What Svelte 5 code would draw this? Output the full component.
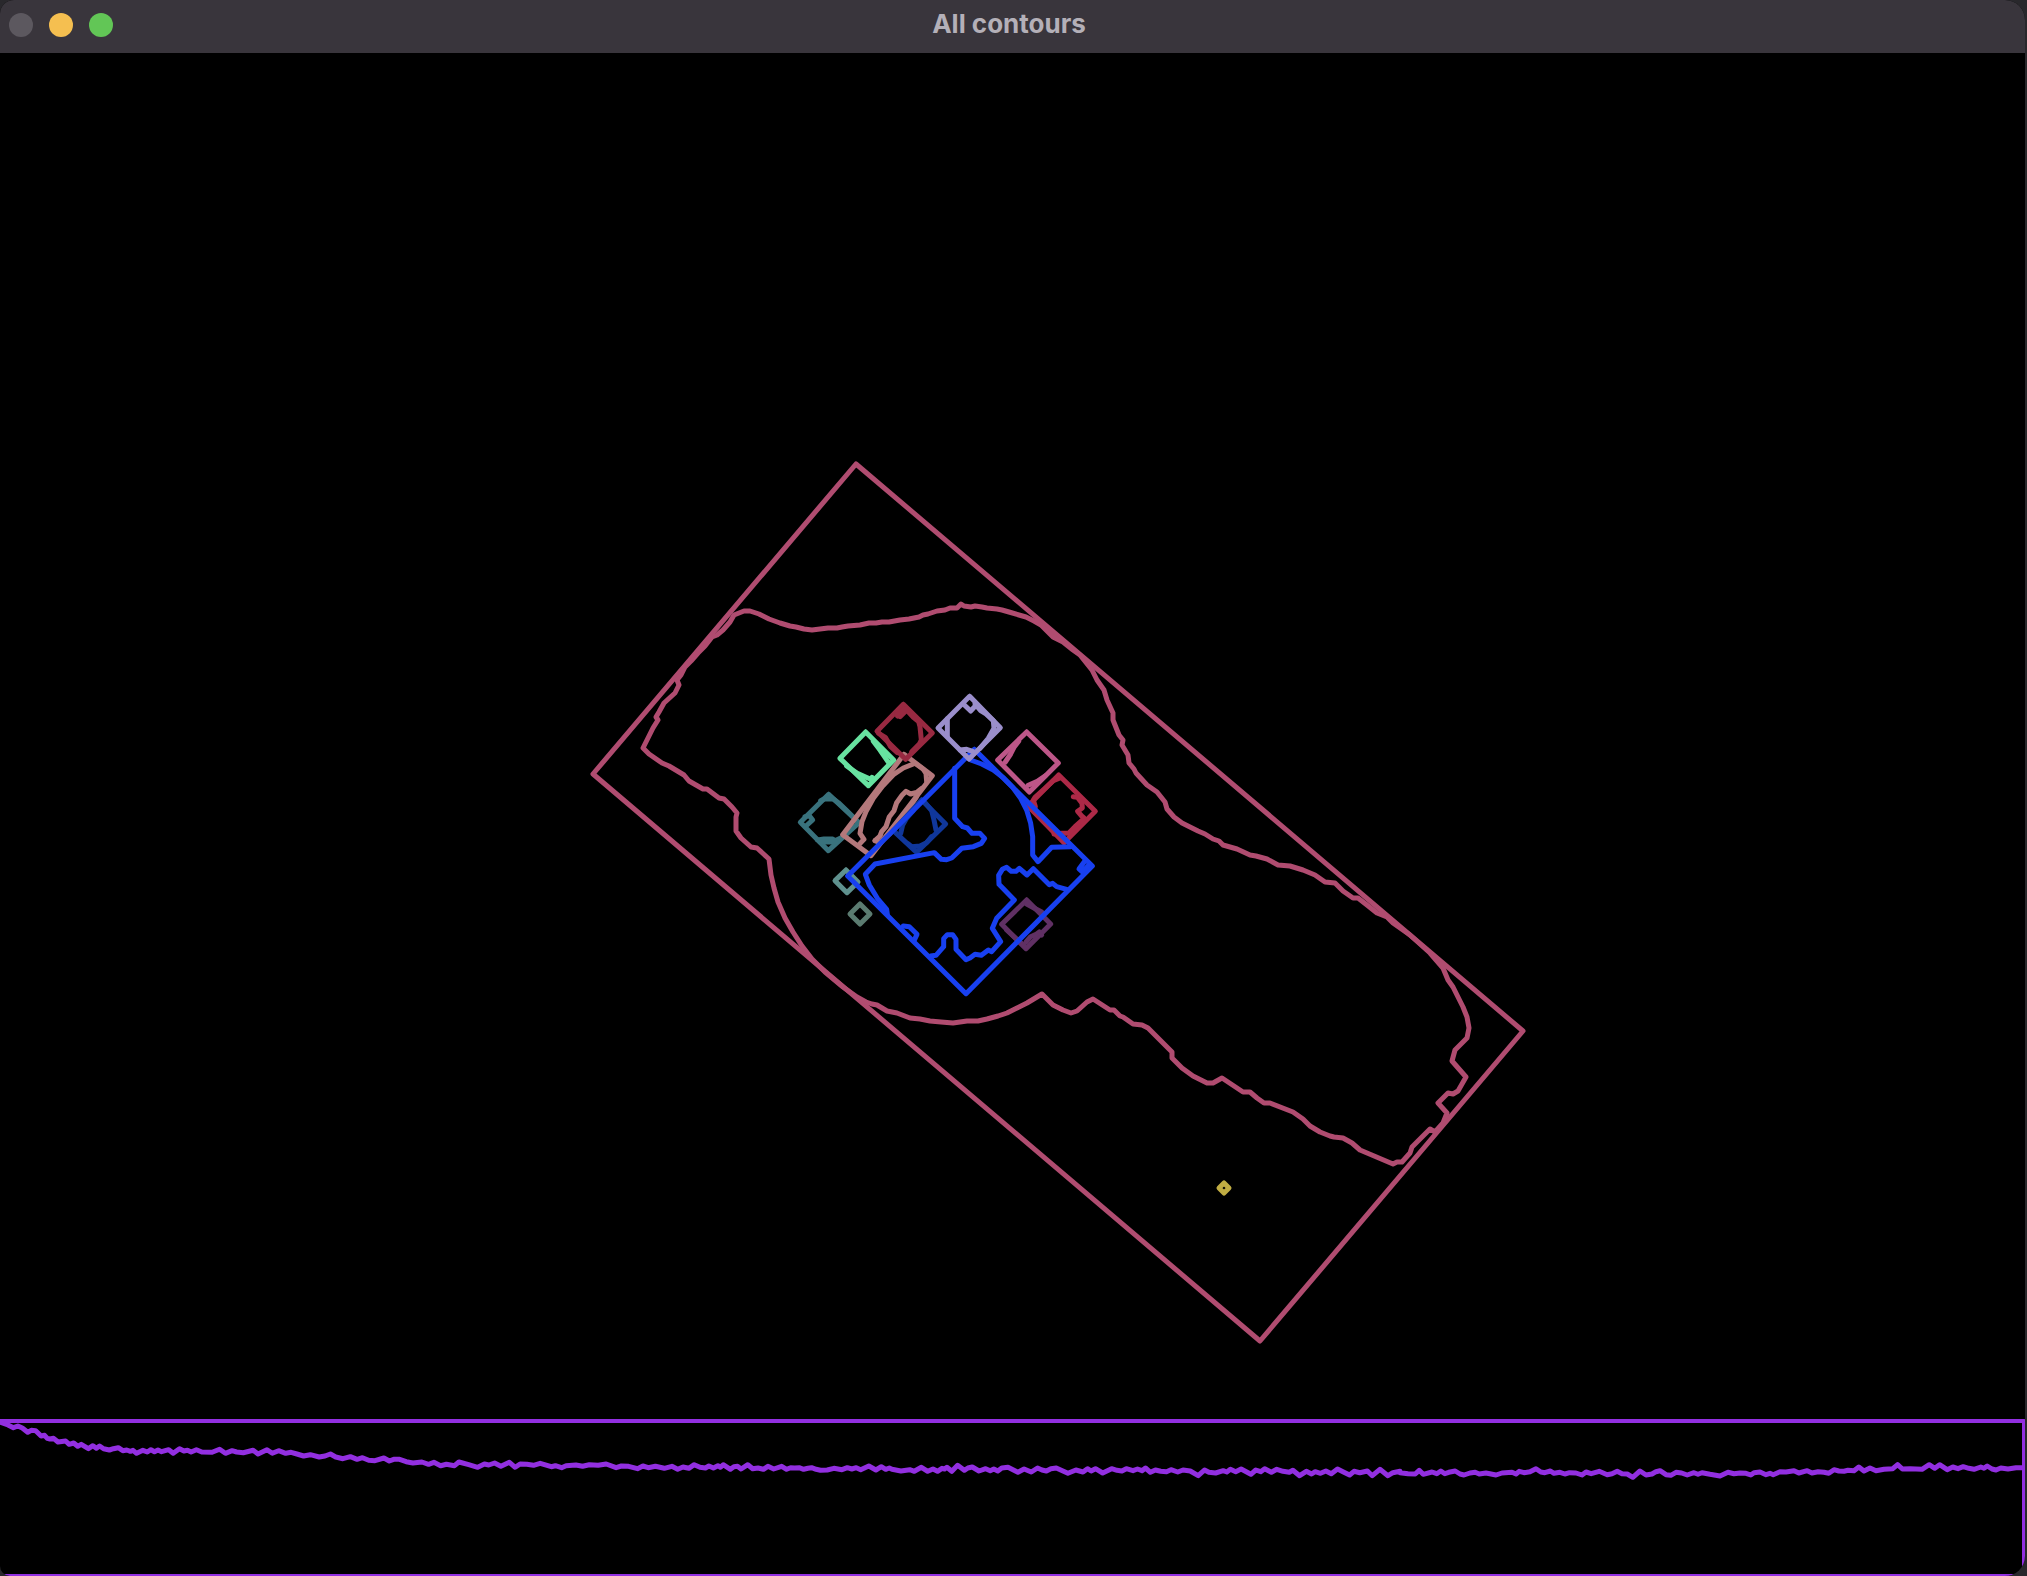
<script>
  const shapes = [
    {
      name: 'teal',
      color: '#39727d',
      lines: [
        '146,343 237,428 145,512 61,427 146,343',
        '122,362 132,357 160,357 175,368 200,392 228,420',
        '75,410 88,407 98,420 78,438',
        '112,480 132,477 158,477 165,482 190,470',
        '120,486 145,486 168,486'
      ]
    },
    {
      name: 'salmon',
      color: '#b4787b',
      lines: [
        '372,223 457,287 273,527 188,464 372,223',
        '400,252 370,264 340,284 308,318 280,355 258,395 246,425 240,460 252,478 237,494',
        '285,482 300,468 305,455 318,440 328,410 342,392 350,368 366,346 378,334 392,342 410,337 425,325',
        '285,482 300,488 330,460 370,410 410,350',
        '405,250 430,268 438,280 440,305'
      ]
    },
    {
      name: 'crimson',
      color: '#982941',
      lines: [
        '370,73 457,159 377,238 291,154 370,73',
        '352,108 372,86 378,92 360,110 350,104',
        '378,88 400,112 416,125 420,140 424,180 418,192 395,215',
        '296,160 316,172 332,200 352,218'
      ]
    },
    {
      name: 'mint',
      color: '#67e2a0',
      lines: [
        '257,156 341,240 265,317 180,235 257,156',
        '280,184 300,210 315,232 326,248',
        '200,258 232,280 250,288 272,298 276,292'
      ]
    },
    {
      name: 'navy',
      color: '#10379b',
      lines: [
        '425,360 497,432 410,517 340,452 425,360',
        '435,368 455,392 462,420 468,450',
        '362,460 368,435 380,414 400,392',
        '385,492 395,500 420,498 440,488 455,470'
      ]
    },
    {
      name: 'seafoam',
      color: '#5f918e',
      lines: ['198,570 234,606 201,638 165,602 198,570']
    },
    {
      name: 'sage',
      color: '#5b7b70',
      lines: ['240,672 270,702 240,732 210,702 240,672']
    },
    {
      name: 'orchid',
      color: '#bd5688',
      lines: [
        '740,156 835,249 748,336 653,240 740,156',
        '716,184 702,202 692,222 676,246',
        '745,316 772,304 795,288'
      ]
    },
    {
      name: 'red',
      color: '#ad2947',
      lines: [
        '836,285 946,394 852,488 744,378 836,285',
        '840,294 820,302 795,325 765,352 760,360 766,380 762,392',
        '880,350 892,352 906,370 907,384 893,394 905,408 912,414',
        '912,416 885,440 866,460 845,460 822,462',
        '765,395 800,430 850,482'
      ]
    },
    {
      name: 'plum',
      color: '#603064',
      lines: [
        '740,660 812,732 738,806 665,733 740,660',
        '740,672 762,684 785,696',
        '738,786 752,770 770,762 778,756 785,765',
        '680,750 705,773 735,800'
      ]
    },
    {
      name: 'blue',
      color: '#1840f0',
      lines: [
        '583,208 937,558 558,941 203,588 583,208',
        '572,240 605,252 640,270 670,293 698,322 722,355 740,390 752,430 758,470 758,525 774,545 815,502 872,500',
        '524,265 524,415 548,440 562,444 576,460 600,460 614,475 604,490 580,500 545,505 515,534 500,539 484,538 463,518 285,552 256,583 268,615 292,655 320,688 322,702',
        '370,738 388,740 411,763 404,778',
        '452,828 468,826 491,800 491,776 502,764 518,764 528,778 528,808 558,839 570,834 585,823 604,826 625,810 635,815 662,785 637,745 650,715 703,660 657,613 656,586 667,568 680,562 694,574 708,574 718,565 741,585 760,566 808,614 818,610 830,620 860,628',
        '913,545 897,567 907,576 926,556'
      ]
    },
    {
      name: 'lavender',
      color: '#9a8ecb',
      lines: [
        '569,49 661,143 567,237 474,144 569,49',
        '550,72 572,93 588,76',
        '585,72 602,92 618,102 640,122 642,145 625,175 600,205',
        '502,116 502,168',
        '540,210 560,208 578,214'
      ]
    }
  ];

  const armOutline =
    '744,611 734,615 730,622 723,630 717,635 712,637 705,646 698,653 691,661 685,667 681,675 677,680 679,685 675,693 664,703 659,712 656,717 658,720 653,728 648,738 643,748 649,754 662,763 669,766 684,775 689,781 703,789 707,789 719,798 724,799 732,807 737,813 736,817 736,831 741,838 751,847 757,848 769,859 771,875 774,888 778,902 785,918 793,932 802,946 812,959 825,972 843,987 857,997 866,1002 872,1004 877,1005 887,1011 897,1013 910,1018 920,1019 930,1021 941,1022 953,1023 967,1021 978,1021 987,1019 998,1016 1007,1013 1017,1008 1027,1003 1042,994 1053,1005 1063,1010 1071,1013 1077,1011 1087,1002 1093,999 1110,1010 1114,1010 1120,1016 1123,1017 1133,1024 1142,1025 1148,1028 1172,1052 1172,1058 1182,1068 1193,1076 1207,1083 1213,1083 1222,1078 1243,1092 1250,1092 1257,1098 1264,1103 1270,1103 1293,1112 1303,1119 1310,1126 1320,1132 1330,1136 1334,1137 1343,1138 1352,1143 1360,1150 1393,1164 1397,1162 1402,1162 1410,1153 1412,1147 1430,1129 1435,1132 1443,1123 1447,1113 1438,1103 1448,1093 1453,1094 1458,1091 1466,1077 1452,1061 1455,1050 1467,1038 1469,1028 1467,1017 1463,1007 1457,995 1453,987 1448,980 1443,968 1430,953 1410,935 1393,923 1387,917 1377,913 1367,905 1358,898 1353,898 1343,891 1335,883 1325,882 1315,875 1303,870 1290,866 1278,865 1267,859 1256,856 1250,855 1237,849 1223,845 1219,841 1213,839 1205,834 1198,831 1182,823 1174,817 1167,809 1165,802 1157,792 1147,785 1136,773 1134,769 1129,763 1128,755 1122,745 1123,740 1119,735 1113,720 1113,713 1107,700 1104,690 1097,680 1092,670 1080,655 1073,650 1063,642 1053,637 1041,625 1034,621 1026,617 1019,615 1009,612 1002,610 997,609 987,608 982,607 975,606 971,607 964,606 961,604 957,608 950,608 945,610 937,611 928,614 923,615 919,617 909,619 900,620 889,622 882,622 876,623 869,623 860,625 848,626 842,627 837,628 828,628 820,629 812,630 804,629 796,627 790,626 780,623 769,619 759,614 750,611';

  // Each run holds x,y samples; x is divided by `scale`, y by 3.
  const runs = [
    {
      start: 0,
      scale: 2.24,
      samples:
        '0,66 18,75 30,83 40,78 50,84 62,97 70,91 80,92 92,108 100,106 106,115 112,117 120,115 130,126 147,123 155,133 165,129 174,139 182,133 198,146 208,137 216,145 223,138 232,146 245,150 254,146 265,143 275,152 284,150 292,154 298,151 306,160 320,151 330,156 338,149 346,155 354,150 362,155 378,149 388,160 402,146 412,153 420,151 428,156 440,149 452,156 475,157 492,148 505,160 520,152 530,156 545,158 567,151 578,162 598,149 610,160 624,152 640,160 652,157 665,162 680,168 695,164 715,171 728,168 740,162 752,171 768,176 785,170 800,178 812,173 826,181 840,182 860,174 872,183 882,178 895,178 910,185 925,189 945,186 960,193 972,187 987,197 1000,193 1018,197 1028,186 1050,194 1070,202 1085,192 1095,195 1108,189 1122,199 1141,187 1154,202 1165,192 1180,193 1195,196 1210,190 1235,200 1244,197 1258,203 1268,197 1290,195 1305,199 1320,194 1340,196 1358,192 1380,203 1392,198 1408,199 1428,206 1440,198 1452,203 1468,199 1488,205 1505,199 1518,208 1530,201 1543,205 1555,194 1568,202'
    },
    {
      start: 700,
      scale: 2.24,
      samples:
        '12,204 20,198 30,204 40,197 46,202 52,194 68,208 76,200 84,199 92,207 107,194 118,206 130,204 142,208 152,199 165,207 183,199 194,208 203,203 212,204 222,203 232,208 242,205 250,203 260,208 270,211 285,210 300,205 318,209 330,203 340,207 350,203 360,209 378,198 394,210 406,200 416,208 424,204 430,208 450,213 470,209 480,214 496,202 510,214 522,207 532,214 542,205 548,207 553,202 564,214 577,196 592,211 600,204 610,201 625,213 640,206 650,212 658,207 667,213 676,204 690,202 712,217 726,207 742,216 756,204 766,210 776,213 786,206 798,204 824,220 842,210 858,216 868,206 876,213 886,206 902,219 922,206 934,211 945,213 955,206 970,212 980,207 990,212 998,204 1009,217 1020,210 1032,214 1045,215 1055,209 1070,216 1082,210 1098,213 1116,227 1130,210 1140,217 1155,219 1172,212 1180,216 1188,208 1200,215 1212,207 1234,223 1245,210 1256,215 1265,206 1280,217 1292,208 1306,214 1320,217 1328,211 1343,227 1358,214 1370,222 1378,215 1390,220 1402,213 1414,221 1428,207 1440,215 1455,225 1465,214 1478,218 1495,213 1506,227 1523,208 1541,227 1552,218 1568,214'
    },
    {
      start: 1400,
      scale: 2.5,
      samples:
        '0,218 20,221 38,222 48,211 58,223 80,216 92,221 102,213 112,221 122,217 138,213 150,222 160,225 175,219 188,217 198,222 215,219 240,225 255,219 280,217 290,222 298,214 310,218 325,215 340,206 352,216 362,218 376,213 385,220 400,217 412,222 424,218 440,219 455,225 465,216 478,221 498,214 518,224 530,221 543,214 555,221 568,222 582,232 600,213 615,225 630,222 640,215 650,212 665,224 677,226 690,217 704,219 718,225 735,218 745,223 755,218 775,223 800,228 820,217 835,221 850,219 865,220 877,225 885,218 900,216 915,224 925,220 933,224 950,215 965,216 985,212 997,219 1018,212 1030,219 1045,215 1060,217 1072,220 1085,209 1097,213 1110,214 1120,211 1135,212 1147,201 1160,213 1175,204 1190,212 1210,208 1232,206 1244,194 1256,207 1275,206 1305,208 1323,194 1337,205 1349,194 1368,209 1382,201 1395,206 1408,200 1422,205 1435,208 1452,201 1460,205 1468,198 1480,207 1490,210 1502,204 1520,207 1540,203 1562,203'
    }
  ];

  const horizon = runs
    .flatMap(({ start, scale, samples }) =>
      samples.split(' ').map((pair) => {
        const [x, y] = pair.split(',').map(Number);
        return `${(start + x / scale).toFixed(1)},${(1400 + y / 3).toFixed(1)}`;
      })
    )
    .join(' ');
</script>

<main class="window">
  <header class="titlebar">
    <div class="controls">
      <button class="control close" type="button" aria-label="Close"></button>
      <button class="control minimize" type="button" aria-label="Minimize"></button>
      <button class="control zoom" type="button" aria-label="Zoom"></button>
    </div>
    <h1 class="title">All contours</h1>
  </header>
  <svg class="canvas" viewBox="0 53 2025 1523" role="img" aria-label="Detected contours">
    <g class="outline arm">
      <polygon points="856,464 1523,1031 1260,1341 593,774" />
      <polygon points={armOutline} />
    </g>
    <g transform="translate(780 680) scale(0.33333)">
      {#each shapes as shape (shape.name)}
        <g class="outline part" stroke={shape.color}>
          {#each shape.lines as line}
            <polyline points={line} />
          {/each}
        </g>
      {/each}
    </g>
    <polygon class="outline speck" points="1224,1183 1229,1188 1224,1193 1219,1188" />
    <g class="outline ground">
      <polyline class="bounds" points="0,1421 2024,1421 2024,1576 0,1576" />
      <polyline points={horizon} />
    </g>
  </svg>
</main>

<style>
  :global(body) {
    margin: 0;
    background: #29282c;
  }

  .window {
    margin-right: 2px;
    overflow: hidden;
    background: #000;
    border-radius: 14px 20px 20px 10px;
  }

  .titlebar {
    display: grid;
    grid-template-columns: 1fr auto 1fr;
    align-items: center;
    height: 53px;
    padding: 0 16px 4px 9px;
    box-sizing: border-box;
    background: #39353c;
  }

  .controls {
    display: flex;
    gap: 16px;
  }

  .control {
    width: 24px;
    height: 24px;
    padding: 0;
    border: 0;
    border-radius: 50%;
  }

  .close {
    background: #5c585f;
  }

  .minimize {
    background: #f5bf50;
  }

  .zoom {
    background: #62c656;
  }

  .title {
    margin: 0;
    padding-bottom: 2px;
    color: #b4b0b8;
    font: 700 26px/32px Inter, 'Liberation Sans', sans-serif;
  }

  .canvas {
    display: block;
    width: 100%;
    height: auto;
  }

  .outline {
    fill: none;
    stroke-linejoin: round;
    stroke-linecap: round;
  }

  .arm {
    stroke: #b04c70;
    stroke-width: 5;
  }

  .part {
    stroke-width: 15;
  }

  .speck {
    stroke: #c1ad43;
    stroke-width: 5;
  }

  .ground {
    stroke: #922fe0;
    stroke-width: 5;
  }

  .bounds {
    stroke-width: 4;
  }
</style>
